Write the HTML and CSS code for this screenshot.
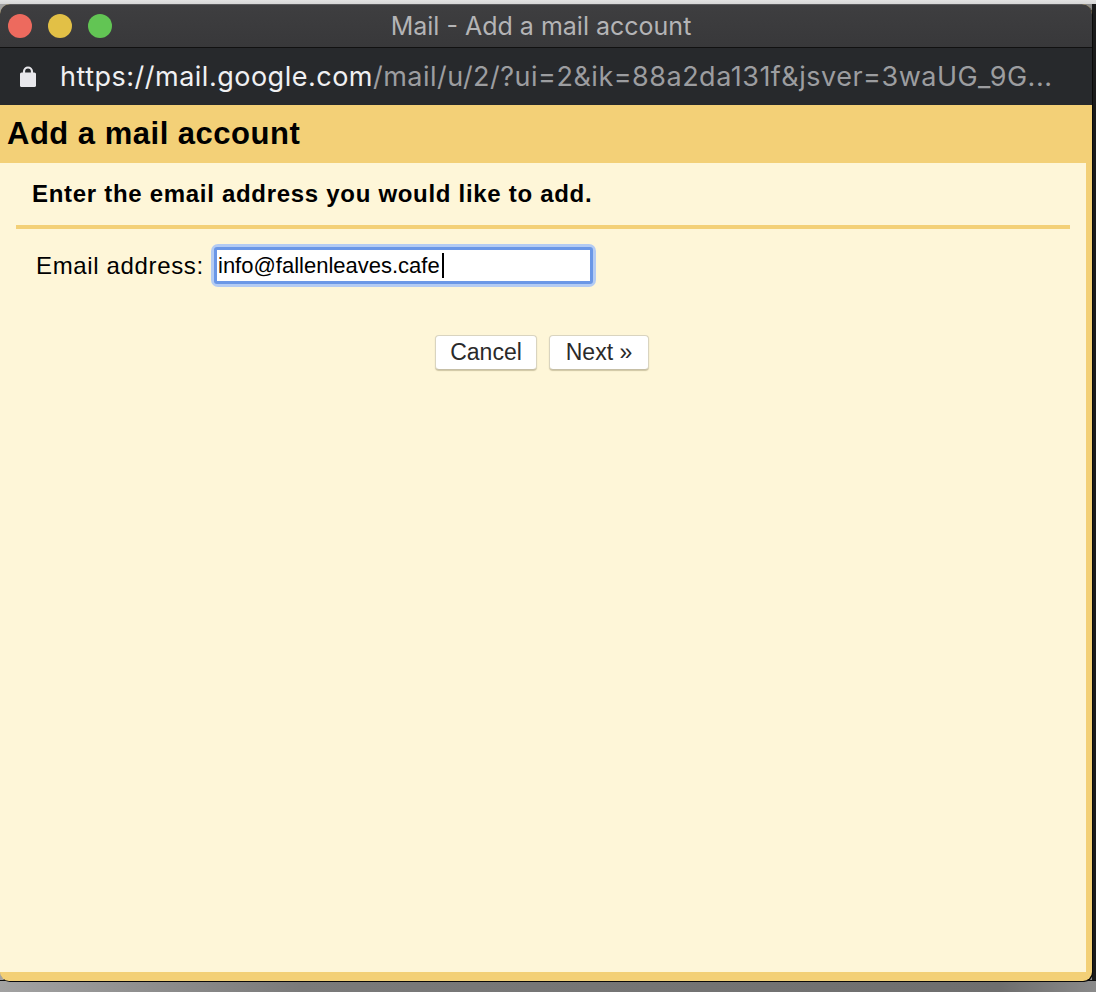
FILE: index.html
```html
<!DOCTYPE html>
<html>
<head>
<meta charset="utf-8">
<title>Mail - Add a mail account</title>
<link rel="stylesheet" href="styles.css">
</head>
<body>
<div class="window">
  <div class="titlebar">
    <div class="lights">
      <span class="light red"></span>
      <span class="light yellow"></span>
      <span class="light green"></span>
    </div>
    <div class="wintitle">Mail - Add a mail account</div>
  </div>
  <div class="addressbar">
    <svg class="lock" width="16" height="21" viewBox="0 0 16 21">
      <path d="M4 8 V5.5 a4 4 0 0 1 8 0 V8" fill="none" stroke="#e8e8ec" stroke-width="2.2"/>
      <rect x="0" y="6.5" width="16" height="14.5" rx="1.6" fill="#e8e8ec"/>
    </svg>
    <div class="url"><span class="host">https://mail.google.com</span><span class="path">/mail/u/2/?ui=2&amp;ik=88a2da131f&amp;jsver=3waUG_9G...</span></div>
  </div>
  <div class="page">
    <h1 class="header">Add a mail account</h1>
    <div class="panel">
      <div class="intro">Enter the email address you would like to add.</div>
      <div class="rule"></div>
      <div class="field">
        <label class="label">Email address:</label>
        <div class="inputwrap"><div class="input">info@fallenleaves.cafe<span class="caret"></span></div></div>
      </div>
      <div class="buttons">
        <button class="btn cancel">Cancel</button>
        <button class="btn next">Next »</button>
      </div>
    </div>
  </div>
</div>
</body>
</html>
```

FILE: styles.css
```css
html, body {
  margin: 0;
  padding: 0;
}
body {
  width: 1096px;
  height: 992px;
  overflow: hidden;
  font-family: "Liberation Sans", Arial, sans-serif;
  background:
    linear-gradient(to bottom, #e2e2e2 0, #d6d6d6 4px, transparent 4px),
    linear-gradient(to bottom, transparent 980px, #0c0c0c 980px, #0c0c0c 981px, transparent 981px),
    linear-gradient(to right, #a2a2a2 0, #7a7a7a 300px, #6e6e6e 1000px, #8a8a8a 1096px);
  background-color: #1b1b1b;
  position: relative;
}
body::before {
  content: "";
  position: absolute;
  left: 1092px;
  top: 4px;
  width: 4px;
  height: 976px;
  background: #1b1b1b;
}
.window {
  position: relative;
  width: 1092px;
  height: 977px;
  margin-top: 4px;
  border-radius: 10px 10px 9px 9px;
  overflow: hidden;
  background: #f3d077;
  box-shadow: 1px 1px 0 #0a0a0a;
}
.titlebar {
  height: 42px;
  background: linear-gradient(to bottom, #3e3e40, #38383a);
  border-top: 1px solid #5a5a5c;
  border-bottom: 1px solid #111;
  display: flex;
  align-items: center;
  position: relative;
}
.lights {
  display: flex;
  gap: 16px;
  padding-left: 8px;
}
.light {
  width: 24px;
  height: 24px;
  border-radius: 50%;
  display: block;
}
.red { background: #ed6a5e; }
.yellow { background: #e2c046; }
.green { background: #62c554; }
.wintitle {
  position: absolute;
  left: 0;
  right: 10px;
  top: 0;
  bottom: 0;
  display: flex;
  align-items: center;
  justify-content: center;
  color: #b4b4b6;
  font-family: Inter, "Liberation Sans", sans-serif;
  font-size: 25px;
}
.addressbar {
  height: 57px;
  background: #27292c;
  display: flex;
  align-items: center;
  padding-left: 20px;
}
.lock {
  display: block;
  margin-top: 0;
}
.url {
  margin-left: 24px;
  font-family: Inter, "Liberation Sans", sans-serif;
  font-size: 27px;
  letter-spacing: 0.5px;
  white-space: nowrap;
}
.host { color: #f0f0f2; }
.path { color: #9c9da0; }
.page {
  height: 873px;
  display: flex;
  flex-direction: column;
}
.header {
  margin: 0;
  height: 58px;
  display: flex;
  align-items: center;
  padding-left: 7px;
  font-size: 31px;
  letter-spacing: 0.5px;
  font-weight: bold;
  color: #000;
  background: #f3d077;
}
.panel {
  flex: 1;
  margin-right: 6px;
  margin-bottom: 6px;
  background: #fef6d8;
  padding: 0 16px;
}
.intro {
  font-weight: bold;
  font-size: 24px;
  letter-spacing: 0.7px;
  color: #000;
  padding: 17px 0 0 16px;
  height: 45px;
}
.rule {
  height: 4px;
  background: #f3d077;
  width: 1054px;
}
.field {
  display: flex;
  align-items: center;
  margin-top: 15px;
  padding-left: 20px;
}
.label {
  font-size: 24px;
  letter-spacing: 0.65px;
  color: #000;
  width: 175px;
}
.inputwrap {
  padding: 3px;
  border-radius: 7px;
  background: #b3cbf3;
}
.input {
  width: 372px;
  height: 31px;
  border: 3px solid #6b97e6;
  border-radius: 3px;
  background: #fff;
  font-size: 22px;
  padding-left: 1px;
  color: #000;
  display: flex;
  align-items: center;
}
.caret {
  display: inline-block;
  width: 2px;
  height: 25px;
  background: #000;
  margin-left: 2px;
}
.buttons {
  display: flex;
  justify-content: center;
  gap: 12px;
  margin-top: 48px;
  margin-left: -2px;
}
.btn {
  height: 35px;
  background: #fff;
  border: 1px solid #d9d4c0;
  border-bottom-color: #c6bfa6;
  border-radius: 4px;
  box-shadow: 0 1px 1px rgba(150,140,100,0.45);
  font-family: "Liberation Sans", Arial, sans-serif;
  font-size: 23px;
  color: #2a2a2a;
  padding: 0;
}
.cancel { width: 102px; }
.next { width: 100px; }
```
